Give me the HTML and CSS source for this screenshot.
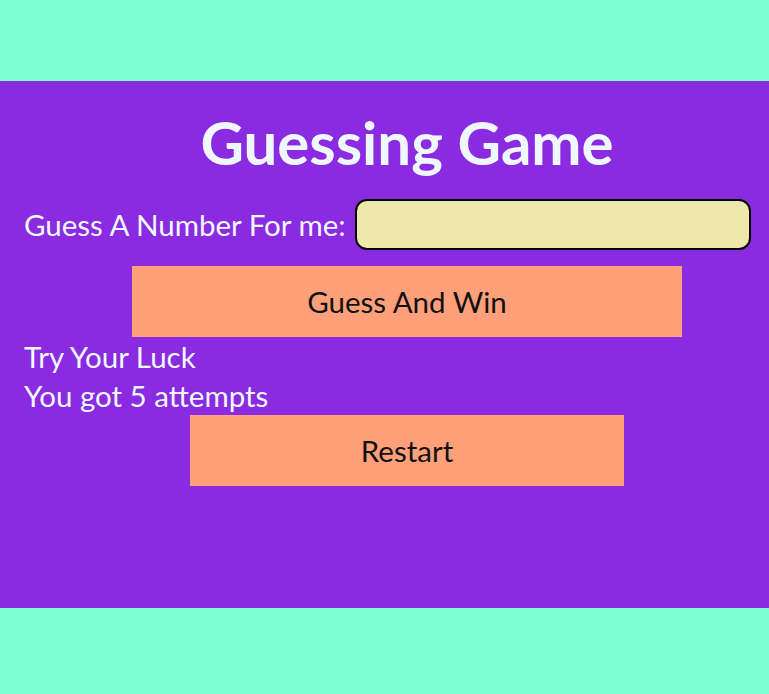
FILE: index.html
```html
<!DOCTYPE html>
<html>
<head>
<meta charset="utf-8">
<link rel="stylesheet" href="styles.css">
</head>
<body>
<div class="box">
  <div class="inner">
    <h1 class="title">Guessing Game</h1>
    <div class="row">
      <label class="label" for="guess">Guess A Number For me:</label>
      <input class="field" id="guess" type="text">
    </div>
    <button class="btn btn-guess">Guess And Win</button>
    <p class="msg">Try Your Luck</p>
    <p class="msg">You got 5 attempts</p>
    <button class="btn btn-restart">Restart</button>
  </div>
</div>
</body>
</html>
```
FILE: styles.css
```css
html, body {
  margin: 0;
  padding: 0;
}
body {
  background: #7fffd4;
  font-family: Lato, "Open Sans", sans-serif;
  padding-top: 81px;
  height: 694px;
  box-sizing: border-box;
  overflow: hidden;
}
.box {
  background: #8a2be2;
  height: 527px;
  overflow: hidden;
}
.inner {
  width: 790px;
  box-sizing: border-box;
  padding-left: 24px;
  padding-top: 28px;
}
.title {
  margin: 0;
  text-align: center;
  color: #f0f8ff;
  font-size: 60px;
  font-weight: 700;
  line-height: 66px;
}
.row {
  display: flex;
  align-items: center;
  gap: 9px;
  margin-top: 24px;
}
.label {
  color: #f0f8ff;
  font-size: 29.5px;
}
.field {
  width: 396px;
  height: 51px;
  box-sizing: border-box;
  background: #eee8aa;
  border: 2px solid #000;
  border-radius: 12px;
  margin: 0;
  padding: 0 8px;
}
.btn {
  display: block;
  margin-left: auto;
  margin-right: auto;
  border: none;
  background: #ffa07a;
  font-family: inherit;
  font-size: 29.5px;
  color: #111;
  height: 71px;
  padding: 0;
}
.btn-guess {
  width: 550px;
  margin-top: 16px;
}
.btn-restart {
  width: 434px;
}
.msg {
  margin: 0;
  color: #f0f8ff;
  font-size: 29.5px;
  line-height: 39px;
}
```
